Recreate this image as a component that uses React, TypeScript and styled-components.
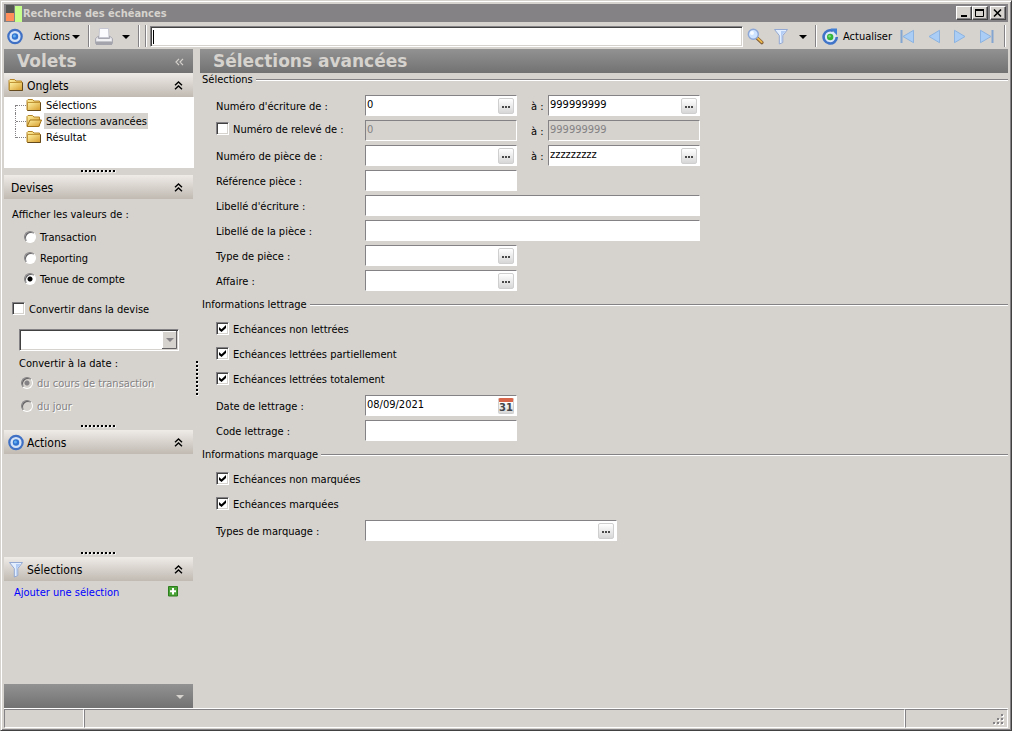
import React from "react";
import styled, { createGlobalStyle, css } from "styled-components";

const face = "#d6d3ce";
const shade = "#848284";

const Global = createGlobalStyle`
  *, *::before, *::after { box-sizing: border-box; }
  body {
    margin: 0;
    background: ${face};
    color: #000;
    font-family: "DejaVu Sans Condensed", "DejaVu Sans", sans-serif;
    font-size: 11px;
    line-height: 14px;
  }
  button, input, select { font: inherit; color: inherit; border-radius: 0; }
  h1, h2, h3, p, ul { margin: 0; padding: 0; font: inherit; }
  svg { display: block; flex: none; }
`;

const Window = styled.div`
  min-height: 100vh;
  display: flex;
  flex-direction: column;
  padding: 2px 3px 2px 2px;
  border: 1px solid ${face};
  border-right-color: #424142;
  border-bottom-color: #424142;
  box-shadow: inset 1px 1px 0 #fff, inset -1px -1px 0 ${shade};
`;

const TitleBar = styled.header`
  display: flex;
  align-items: center;
  height: 18px;
  margin: 1px 0 0 1px;
  padding: 0 2px;
  background: ${shade};
  color: ${face};
  font-weight: bold;
  h1 { flex: 1; margin-left: 1px; padding-top: 1px; font-weight: bold; }
`;

const WindowButton = styled.button<{ $gap?: boolean }>`
  width: 16px;
  height: 14px;
  padding: 0;
  margin-left: ${(p) => (p.$gap ? "2px" : "0")};
  display: flex;
  align-items: center;
  justify-content: center;
  color: #000;
  background: ${face};
  border: 1px solid;
  border-color: #fff #424142 #424142 #fff;
  box-shadow: inset -1px -1px 0 ${shade};
`;

const Toolbar = styled.div`
  display: flex;
  align-items: center;
  height: 24px;
  margin-top: 2px;
  padding: 0 2px 0 4px;
`;

const ToolButton = styled.button<{ $width: number }>`
  flex: none;
  width: ${(p) => p.$width}px;
  height: 22px;
  padding: 1px 0 0;
  display: flex;
  align-items: center;
  justify-content: center;
  gap: 4px;
  white-space: nowrap;
  background: none;
  border: 0;
`;

const MenuButton = styled(ToolButton)`
  justify-content: flex-end;
  gap: 2px;
  padding-right: 8px;
`;

const Divider = styled.span<{ $margin?: string }>`
  flex: none;
  width: 2px;
  height: 22px;
  margin: ${(p) => p.$margin || "0"};
  border-left: 1px solid ${shade};
  border-right: 1px solid #fff;
`;

const sunken = css`
  border: 1px solid;
  border-color: ${shade} #fff #fff ${shade};
`;

const SearchInput = styled.input`
  flex: 1;
  min-width: 0;
  height: 21px;
  margin: 0 3px;
  padding: 0 2px;
  outline: 0;
  ${sunken}
  box-shadow: inset 1px 1px 0 #424142, inset -1px -1px 0 ${face};
  background: linear-gradient(#000, #000) 2px 3px / 1px 14px no-repeat #fff;
`;

const Workspace = styled.div`
  flex: 1;
  display: flex;
  padding-left: 1px;
  margin-top: 1px;
`;

const Sidebar = styled.aside`
  flex: none;
  width: 189px;
  display: flex;
  flex-direction: column;
`;

const Banner = styled.div`
  flex: none;
  height: 24px;
  display: flex;
  align-items: center;
  padding: 0 9px 0 13px;
  background: linear-gradient(#929292, #727272);
  color: ${face};
  h2 {
    flex: 1;
    padding-top: 1px;
    font-family: "DejaVu Sans", sans-serif;
    font-size: 17px;
    line-height: 23px;
    font-weight: bold;
  }
`;

const BannerButton = styled.button`
  padding: 1px 0 0;
  border: 0;
  background: none;
  color: inherit;
  display: flex;
`;

const PanelHead = styled.div`
  flex: none;
  height: 24px;
  display: flex;
  align-items: center;
  gap: 3px;
  padding: 0 10px 0 4px;
  background: linear-gradient(#efebe7, #c0bab2);
  font-size: 12px;
  h3 { flex: 1; padding-top: 2px; }
  h3:first-child { padding-left: 3px; }
`;

const Splitter = styled.div`
  flex: none;
  height: 7px;
  display: flex;
  align-items: flex-start;
  justify-content: center;
  padding-top: 1px;
  background: ${face};
`;

const VerticalSplitter = styled.div`
  flex: none;
  width: 7px;
  display: flex;
  align-items: center;
  justify-content: center;
`;

const Tree = styled.ul`
  flex: none;
  height: 71px;
  margin-right: -1px;
  background: #fff;
  list-style: none;
`;

const TreeItem = styled.li<{ $last?: boolean }>`
  position: relative;
  height: 16px;
  display: flex;
  align-items: center;
  padding-left: 22px;
  &::before {
    content: "";
    position: absolute;
    left: 11px;
    top: 0;
    height: ${(p) => (p.$last ? "9px" : "16px")};
    border-left: 1px dotted ${shade};
  }
  &:first-child::before {
    top: 8px;
    height: 8px;
  }
  &::after {
    content: "";
    position: absolute;
    left: 12px;
    top: 8px;
    width: 10px;
    border-top: 1px dotted ${shade};
  }
`;

const TreeLink = styled.a<{ $active?: boolean }>`
  margin-left: 2px;
  padding: 1px 1px 0 2px;
  line-height: 15px;
  color: #000;
  text-decoration: none;
  background: ${(p) => (p.$active ? face : "none")};
`;

const CurrencyPanel = styled.div`
  flex: none;
  padding: 8px 15px 8px 8px;
  line-height: 16px;
`;

const ConvertBlock = styled.div`
  padding-left: 7px;
`;

const RadioList = styled.div<{ $indent: number; $top: number; $gap: number }>`
  display: flex;
  flex-direction: column;
  gap: ${(p) => p.$gap}px;
  margin-top: ${(p) => p.$top}px;
  padding-left: ${(p) => p.$indent}px;
`;

const Choice = styled.label<{ $disabled?: boolean }>`
  display: flex;
  align-items: center;
  gap: 4px;
  color: ${(p) => (p.$disabled ? shade : "inherit")};
  text-shadow: ${(p) => (p.$disabled ? "1px 1px 0 #fff" : "none")};
`;

const ConvertChoice = styled(Choice)`
  margin: 14px 0 11px;
`;

const Radio = styled.input.attrs({ type: "radio" })`
  appearance: none;
  flex: none;
  width: 12px;
  height: 12px;
  margin: 0 0 2px;
  border-radius: 50%;
  ${sunken}
  box-shadow: inset 1px 1px 0 #636163;
  background: #fff;
  &:disabled { background: ${face}; }
  &:checked { background: radial-gradient(circle at 5px 5px, #000 2px, #fff 3px); }
  &:checked:disabled { background: radial-gradient(circle at 5px 5px, ${shade} 2px, ${face} 3px); }
`;

const Check = styled.input.attrs({ type: "checkbox" })`
  appearance: none;
  flex: none;
  width: 13px;
  height: 13px;
  margin: 0 0 3px;
  padding: 1px;
  ${sunken}
  box-shadow: inset 1px 1px 0 #424142, inset -1px -1px 0 ${face};
  background: #fff;
  display: grid;
  place-items: center;
  &:checked::before {
    content: "";
    width: 7px;
    height: 7px;
    background: #000;
    clip-path: polygon(0 29%, 36% 62%, 100% 0, 100% 43%, 36% 100%, 0 72%);
  }
`;

const ComboFrame = styled.div`
  position: relative;
  display: flex;
  width: 160px;
  height: 22px;
  svg { position: absolute; right: 2px; top: 2px; pointer-events: none; }
`;

const Combo = styled.select`
  appearance: none;
  width: 100%;
  padding: 0 4px;
  background: #fff;
  opacity: 1;
  ${sunken}
  box-shadow: inset 1px 1px 0 #424142, inset -1px -1px 0 ${face};
`;

const ConvertLabel = styled.p`
  margin-top: 5px;
`;

const ActionsArea = styled.div`
  flex: none;
  height: 96px;
`;

const SelectionArea = styled.div`
  flex: 1;
  display: flex;
  align-items: flex-start;
  justify-content: space-between;
  padding: 4px 15px 0 10px;
  a { padding-top: 1px; color: #0000ff; text-decoration: none; }
`;

const IconButton = styled.button`
  padding: 1px 0;
  border: 0;
  background: none;
  display: flex;
`;

const Main = styled.main`
  flex: 1;
  min-width: 0;
`;

const Group = styled.section`
  padding-bottom: 7px;
`;

const GroupTitle = styled.h3`
  display: flex;
  align-items: center;
  gap: 3px;
  padding-left: 2px;
  height: 14px;
  line-height: 16px;
  white-space: nowrap;
  &::after {
    content: "";
    flex: 1;
    height: 2px;
    border-top: 1px solid ${shade};
    border-bottom: 1px solid #fff;
  }
`;

const Rows = styled.div`
  display: flex;
  flex-direction: column;
  gap: 4px;
  padding: 8px 0 0 16px;
`;

const Row = styled.div`
  display: flex;
  align-items: center;
  height: 21px;
`;

const RowLabel = styled.label`
  flex: none;
  width: 149px;
  padding-top: 2px;
`;

const RowChoice = styled(Choice)`
  flex: none;
  width: 149px;
  padding-bottom: 1px;
  white-space: nowrap;
`;

const ToLabel = styled.label`
  flex: none;
  width: 17px;
  margin-left: 14px;
  padding-top: 2px;
  white-space: nowrap;
`;

const Field = styled.div<{ $width: number; $disabled?: boolean }>`
  flex: 0 1 ${(p) => p.$width}px;
  height: 21px;
  display: flex;
  align-items: center;
  padding-right: 2px;
  ${sunken}
  background: ${(p) => (p.$disabled ? face : "#fff")};
  color: ${(p) => (p.$disabled ? shade : "#000")};
`;

const FieldInput = styled.input`
  flex: 1;
  min-width: 0;
  height: 19px;
  padding: 0 0 3px 1px;
  border: 0;
  outline: 0;
  background: none;
`;

const PickButton = styled.button`
  flex: none;
  width: 16px;
  height: 16px;
  padding: 0;
  display: flex;
  align-items: center;
  justify-content: center;
  border: 1px solid #cecfce;
  border-radius: 2px;
  background: linear-gradient(#fff, #d6d7d6);
`;

const StatusBar = styled.footer`
  flex: none;
  height: 20px;
  display: flex;
  margin-left: 1px;
  border-top: 1px solid #fff;
`;

const StatusCell = styled.div<{ $width?: number }>`
  flex: ${(p) => (p.$width ? `none` : "1")};
  width: ${(p) => (p.$width ? `${p.$width}px` : "auto")};
  display: flex;
  align-items: flex-end;
  justify-content: flex-end;
  padding: 0 2px 1px 0;
  ${sunken}
`;

const Target = () => (
  <svg width="16" height="17" viewBox="0 0 16 17">
    <circle cx="8" cy="8.5" r="6.7" fill="#d6e3f7" stroke="#3f70c4" strokeWidth="2.2" />
    <circle cx="8" cy="8.5" r="3.2" fill="#2f72cf" />
    <circle cx="7.4" cy="8" r="1.5" fill="#63aef0" />
  </svg>
);

const Caret = ({ fill = "#000" }: { fill?: string }) => (
  <svg width="8" height="4" viewBox="0 0 8 4">
    <path d="M0 0h8L4 4z" fill={fill} />
  </svg>
);

const Funnel = () => (
  <svg width="16" height="17" viewBox="0 0 16 17">
    <path d="M1.5 1.5h13L9.8 7.500v7L6.300 16V7.500z" fill="#e3eeff" stroke="#93a8d2" />
    <path d="M8 3h4.500L8.800 7.500v6.200L8 14z" fill="#b3cdf4" />
  </svg>
);

const Printer = () => (
  <svg width="18" height="18" viewBox="0 0 18 18">
    <path d="M4.5 .5h9l.5 9H4z" fill="#fbfbfd" stroke="#c6c6d0" />
    <path d="M.5 10.500l3-2.500v2.500h11V8l3 2.500v5H.5z" fill="#e2e2e8" stroke="#a9a9b2" />
    <path d="M1 13.500h16v3.500H1z" fill="#a4a4ac" />
    <path d="M2 12h14" stroke="#fff" />
  </svg>
);

const Magnifier = () => (
  <svg width="17" height="17" viewBox="0 0 17 17">
    <path d="M10.5 10.5l4.300 4" stroke="#84613a" strokeWidth="3.600" strokeLinecap="round" />
    <path d="M10.700 10.300l4 3.800" stroke="#efba4a" strokeWidth="1.800" strokeLinecap="round" />
    <circle cx="6.3" cy="6.3" r="5" fill="#cee3ff" stroke="#8ca6d6" strokeWidth="1.4" />
    <circle cx="5" cy="5" r="2" fill="#f7fbff" />
  </svg>
);

const Refresh = () => (
  <svg width="17" height="17" viewBox="0 0 17 17">
    <circle cx="8.2" cy="9" r="6" fill="#dce8fa" />
    <path d="M11 2.900A6.600 6.600 0 1 0 14.800 9" fill="none" stroke="#3f74c8" strokeWidth="2.600" />
    <path d="M8.500 .5H15v6.700z" fill="#3f7fd4" />
    <circle cx="8.2" cy="9" r="3.200" fill="#35b53a" />
    <circle cx="7.600" cy="8.300" r="1.200" fill="#7bdc7b" />
  </svg>
);

const NavIcon = ({ back, end }: { back?: boolean; end?: boolean }) => (
  <svg width="16" height="15" viewBox="0 0 16 15">
    <g transform={back ? "matrix(-1 0 0 1 16 0)" : undefined}>
      <path d="M2.500 1.300v12.400L13 7.500z" fill="#a9cdf5" stroke="#8db3e0" />
      {end && <path d="M14.500 1v13" stroke="#84a5cf" strokeWidth="2" />}
    </g>
  </svg>
);

const Folder = ({ open }: { open?: boolean }) => (
  <svg width="16" height="14" viewBox="0 0 16 14">
    <defs>
      <linearGradient id="folderFill" x1="0" y1="0" x2="1" y2="1">
        <stop offset="0" stopColor="#fff3a5" />
        <stop offset="1" stopColor="#d69a29" />
      </linearGradient>
    </defs>
    <path d="M1 12V2.5l1-1h4.5L8 3h5.5v9z" fill="url(#folderFill)" stroke="#b58629" />
    {open ? (
      <path d="M1 12.5L4 6h11.5l-2.7 6.5z" fill="url(#folderFill)" stroke="#a57518" />
    ) : (
      <>
        <path d="M1.500 4.500h13v8h-13z" fill="url(#folderFill)" stroke="#c09334" />
        <path d="M1.5 12.5h13V4.5" fill="none" stroke="#63491c" />
      </>
    )}
  </svg>
);

const Collapse = () => (
  <svg width="9" height="9" viewBox="0 0 9 9" fill="none" stroke="#000" strokeWidth="1.4">
    <path d="M1 4.2L4.5 1 8 4.2M1 8.2L4.5 5 8 8.2" />
  </svg>
);

const Dots = () => (
  <svg width="36" height="4" viewBox="0 0 36 4">
    <path d="M1 2.500h35" stroke="#fff" strokeWidth="2" strokeDasharray="2 2" />
    <path d="M0 2h35" stroke="#000" strokeWidth="2" strokeDasharray="2 2" />
  </svg>
);

const VerticalDots = () => (
  <svg width="4" height="36" viewBox="0 0 4 36">
    <path d="M2.500 1v35" stroke="#fff" strokeWidth="2" strokeDasharray="2 2" />
    <path d="M2 0v35" stroke="#000" strokeWidth="2" strokeDasharray="2 2" />
  </svg>
);

const Ellipsis = () => (
  <svg width="10" height="10" viewBox="0 0 10 10" fill="#4a494a">
    <path d="M1 5h2v2H1zM4 5h2v2H4zM7 5h2v2H7z" />
  </svg>
);

const DayButton = styled(PickButton)`
  border-top: 4px solid #d6654a;
  font-family: "DejaVu Sans", sans-serif;
  font-size: 10px;
  line-height: 11px;
  font-weight: bold;
  color: #42454a;
`;

type FieldProps = {
  id: string;
  value?: string;
  width?: number;
  pick?: "list" | "date";
  disabled?: boolean;
  label?: string;
};

const TextField = ({ id, value = "", width = 152, pick, disabled, label }: FieldProps) => (
  <Field $width={width} $disabled={disabled}>
    <FieldInput id={id} defaultValue={value} disabled={disabled} aria-label={label} />
    {pick === "list" && (
      <PickButton aria-label="Choisir">
        <Ellipsis />
      </PickButton>
    )}
    {pick === "date" && <DayButton aria-label="Calendrier">31</DayButton>}
  </Field>
);

const LabeledRow = ({ text, ...field }: FieldProps & { text: string }) => (
  <Row>
    <RowLabel htmlFor={field.id}>{text}</RowLabel>
    <TextField {...field} />
  </Row>
);

const CheckRow = ({ text }: { text: string }) => (
  <Row>
    <RowChoice>
      <Check defaultChecked />
      {text}
    </RowChoice>
  </Row>
);

const CollapseButton = () => (
  <BannerButton aria-label="Réduire">
    <Collapse />
  </BannerButton>
);

export default function App() {
  return (
    <>
      <Global />
      <Window>
        <TitleBar>
          <svg width="16" height="17" viewBox="0 0 16 17">
            <path d="M0 0h8v8H0z" fill="#525552" />
            <path d="M0 8h8v8H0z" fill="#ff8e5a" />
            <path d="M9 1h7v16H9z" fill="#c6ff8c" />
          </svg>
          <h1>Recherche des échéances</h1>
          <WindowButton aria-label="Minimiser">
            <svg width="12" height="10" viewBox="0 0 12 10">
              <path d="M3 8h6" stroke="#000" strokeWidth="2" />
            </svg>
          </WindowButton>
          <WindowButton aria-label="Agrandir">
            <svg width="12" height="10" viewBox="0 0 12 10">
              <path d="M1.5 1.5h8v7h-8zM1 1.5h9" fill="none" stroke="#000" />
              <path d="M1 2h9" stroke="#000" strokeWidth="2" />
            </svg>
          </WindowButton>
          <WindowButton aria-label="Fermer" $gap>
            <svg width="12" height="10" viewBox="0 0 12 10">
              <path d="M2 1.5l7 7M9 1.5l-7 7" stroke="#000" strokeWidth="1.6" />
            </svg>
          </WindowButton>
        </TitleBar>

        <Toolbar>
          <Target />
          <MenuButton $width={65}>
            Actions <Caret />
          </MenuButton>
          <Divider />
          <ToolButton $width={27} aria-label="Imprimer">
            <Printer />
          </ToolButton>
          <ToolButton $width={18} aria-label="Options d'impression">
            <Caret />
          </ToolButton>
          <Divider $margin="0 0 0 3px" />
          <Divider $margin="0 0 0 5px" />
          <SearchInput aria-label="Rechercher" />
          <ToolButton $width={18} aria-label="Lancer la recherche">
            <Magnifier />
          </ToolButton>
          <ToolButton $width={34} aria-label="Filtrer">
            <Funnel />
          </ToolButton>
          <ToolButton $width={10} aria-label="Options de filtre">
            <Caret />
          </ToolButton>
          <Divider $margin="0 5px 0 7px" />
          <ToolButton $width={70}>
            <Refresh /> Actualiser
          </ToolButton>
          <ToolButton $width={32} aria-label="Premier">
            <NavIcon back end />
          </ToolButton>
          <ToolButton $width={20} aria-label="Précédent">
            <NavIcon back />
          </ToolButton>
          <ToolButton $width={32} aria-label="Suivant">
            <NavIcon />
          </ToolButton>
          <ToolButton $width={20} aria-label="Dernier">
            <NavIcon end />
          </ToolButton>
          <Divider $margin="0 0 0 8px" />
        </Toolbar>

        <Workspace>
          <Sidebar>
            <Banner>
              <h2>Volets</h2>
              <BannerButton aria-label="Masquer les volets">
                <svg width="9" height="8" viewBox="0 0 9 8" fill="none" stroke="#d6d3ce" strokeWidth="1.2">
                  <path d="M4 .8L1 4l3 3.2M8 .8L5 4l3 3.2" />
                </svg>
              </BannerButton>
            </Banner>
            <PanelHead>
              <Folder />
              <h3>Onglets</h3>
              <CollapseButton />
            </PanelHead>
            <Tree>
              <TreeItem>
                <Folder />
                <TreeLink href="#selections">Sélections</TreeLink>
              </TreeItem>
              <TreeItem>
                <Folder open />
                <TreeLink href="#avancees" $active>
                  Sélections avancées
                </TreeLink>
              </TreeItem>
              <TreeItem $last>
                <Folder />
                <TreeLink href="#resultat">Résultat</TreeLink>
              </TreeItem>
            </Tree>
            <Splitter>
              <Dots />
            </Splitter>
            <PanelHead>
              <h3>Devises</h3>
              <CollapseButton />
            </PanelHead>
            <CurrencyPanel>
              <p>Afficher les valeurs de :</p>
              <RadioList $indent={12} $top={7} $gap={5}>
                <Choice>
                  <Radio name="valeurs" />
                  Transaction
                </Choice>
                <Choice>
                  <Radio name="valeurs" />
                  Reporting
                </Choice>
                <Choice>
                  <Radio name="valeurs" defaultChecked />
                  Tenue de compte
                </Choice>
              </RadioList>
              <ConvertChoice>
                <Check />
                Convertir dans la devise
              </ConvertChoice>
              <ConvertBlock>
                <ComboFrame>
                  <Combo aria-label="Devise" disabled />
                  <svg width="15" height="18" viewBox="0 0 15 18">
                    <path d="M0 0h15v18H0z" fill="#d6d3ce" />
                    <path d="M.5 17V.5H14" fill="none" stroke="#fff" />
                    <path d="M0 17.5h14.5V0" fill="none" stroke="#636163" />
                    <path d="M4 7h8l-4 4z" fill="#848284" />
                  </svg>
                </ComboFrame>
                <ConvertLabel>Convertir à la date :</ConvertLabel>
                <RadioList $indent={2} $top={4} $gap={7}>
                  <Choice $disabled>
                    <Radio name="date" disabled defaultChecked />
                    du cours de transaction
                  </Choice>
                  <Choice $disabled>
                    <Radio name="date" disabled />
                    du jour
                  </Choice>
                </RadioList>
              </ConvertBlock>
            </CurrencyPanel>
            <Splitter>
              <Dots />
            </Splitter>
            <PanelHead>
              <Target />
              <h3>Actions</h3>
              <CollapseButton />
            </PanelHead>
            <ActionsArea />
            <Splitter>
              <Dots />
            </Splitter>
            <PanelHead>
              <Funnel />
              <h3>Sélections</h3>
              <CollapseButton />
            </PanelHead>
            <SelectionArea>
              <a href="#ajouter">Ajouter une sélection</a>
              <IconButton aria-label="Ajouter">
                <svg width="10" height="11" viewBox="0 0 10 11">
                  <path d="M.5.500h9v9.500h-9z" fill="#4aa336" stroke="#2c7d1c" />
                  <path d="M5 2v6.500M2 5.200h6" stroke="#fff" strokeWidth="2" />
                </svg>
              </IconButton>
            </SelectionArea>
            <Banner>
              <h2 aria-hidden="true" />
              <BannerButton aria-label="Autres volets">
                <Caret fill="#d6d3ce" />
              </BannerButton>
            </Banner>
          </Sidebar>

          <VerticalSplitter>
            <VerticalDots />
          </VerticalSplitter>

          <Main>
            <Banner>
              <h2>Sélections avancées</h2>
            </Banner>
            <Group>
              <GroupTitle>Sélections</GroupTitle>
              <Rows>
                <Row>
                  <RowLabel htmlFor="ecriture-de">Numéro d'écriture de :</RowLabel>
                  <TextField id="ecriture-de" value="0" pick="list" />
                  <ToLabel htmlFor="ecriture-a">à :</ToLabel>
                  <TextField id="ecriture-a" value="999999999" pick="list" />
                </Row>
                <Row>
                  <RowChoice>
                    <Check />
                    Numéro de relevé de :
                  </RowChoice>
                  <TextField id="releve-de" value="0" disabled label="Numéro de relevé de" />
                  <ToLabel htmlFor="releve-a">à :</ToLabel>
                  <TextField id="releve-a" value="999999999" disabled />
                </Row>
                <Row>
                  <RowLabel htmlFor="piece-de">Numéro de pièce de :</RowLabel>
                  <TextField id="piece-de" pick="list" />
                  <ToLabel htmlFor="piece-a">à :</ToLabel>
                  <TextField id="piece-a" value="zzzzzzzzz" pick="list" />
                </Row>
                <LabeledRow text="Référence pièce :" id="reference" />
                <LabeledRow text="Libellé d'écriture :" id="libelle-ecriture" width={335} />
                <LabeledRow text="Libellé de la pièce :" id="libelle-piece" width={335} />
                <LabeledRow text="Type de pièce :" id="type-piece" pick="list" />
                <LabeledRow text="Affaire :" id="affaire" pick="list" />
              </Rows>
            </Group>
            <Group>
              <GroupTitle>Informations lettrage</GroupTitle>
              <Rows>
                <CheckRow text="Echéances non lettrées" />
                <CheckRow text="Echéances lettrées partiellement" />
                <CheckRow text="Echéances lettrées totalement" />
                <LabeledRow text="Date de lettrage :" id="date-lettrage" value="08/09/2021" pick="date" />
                <LabeledRow text="Code lettrage :" id="code-lettrage" />
              </Rows>
            </Group>
            <Group>
              <GroupTitle>Informations marquage</GroupTitle>
              <Rows>
                <CheckRow text="Echéances non marquées" />
                <CheckRow text="Echéances marquées" />
                <LabeledRow text="Types de marquage :" id="types-marquage" width={252} pick="list" />
              </Rows>
            </Group>
          </Main>
        </Workspace>

        <StatusBar>
          <StatusCell $width={80} />
          <StatusCell />
          <StatusCell $width={103}>
            <svg width="12" height="12" viewBox="0 0 12 12">
              <path d="M9 1h2v2H9zM5 5h2v2H5zM9 5h2v2H9zM1 9h2v2H1zM5 9h2v2H5zM9 9h2v2H9z" fill="#fff" />
              <path d="M8 0h2v2H8zM4 4h2v2H4zM8 4h2v2H8zM0 8h2v2H0zM4 8h2v2H4zM8 8h2v2H8z" fill="#848284" />
            </svg>
          </StatusCell>
        </StatusBar>
      </Window>
    </>
  );
}
